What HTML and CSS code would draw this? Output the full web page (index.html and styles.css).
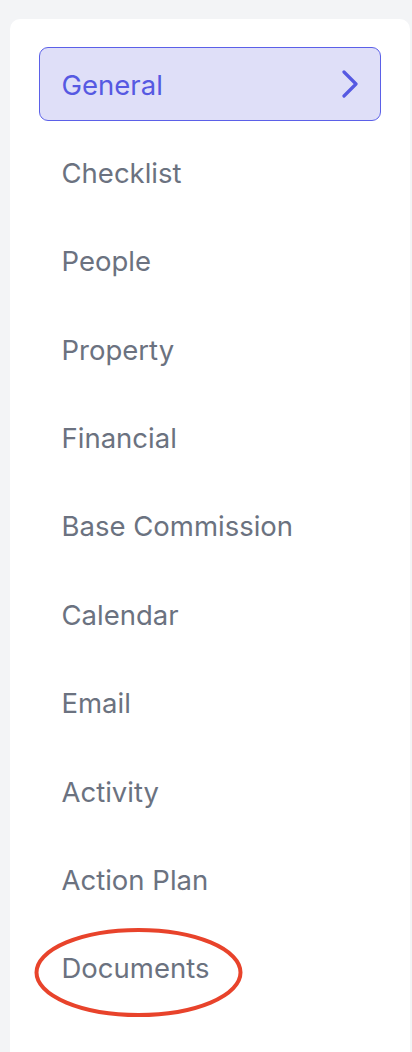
FILE: index.html
```html
<!DOCTYPE html>
<html lang="en">
<head>
<meta charset="utf-8">
<title>Menu</title>
<link rel="stylesheet" href="styles.css">
</head>
<body>
<div class="page">
  <nav class="card">
    <ul class="menu">
      <li class="item active">
        <span class="label">General</span>
        <svg class="chev" width="16" height="28" viewBox="0 0 16 28"><path d="M2 2 L14 14 L2 26" fill="none" stroke="currentColor" stroke-width="3.2" stroke-linecap="round" stroke-linejoin="round"/></svg>
      </li>
      <li class="item"><span class="label">Checklist</span></li>
      <li class="item"><span class="label">People</span></li>
      <li class="item"><span class="label">Property</span></li>
      <li class="item"><span class="label">Financial</span></li>
      <li class="item"><span class="label">Base Commission</span></li>
      <li class="item"><span class="label">Calendar</span></li>
      <li class="item"><span class="label">Email</span></li>
      <li class="item"><span class="label">Activity</span></li>
      <li class="item"><span class="label">Action Plan</span></li>
      <li class="item highlighted">
        <span class="label">Documents</span>
        <svg class="ring" width="209" height="91" viewBox="0 0 209 91"><ellipse cx="104.5" cy="45.5" rx="102" ry="42.5" fill="none" stroke="#e8432b" stroke-width="4"/></svg>
      </li>
    </ul>
  </nav>
</div>
</body>
</html>
```
FILE: styles.css
```css
* { box-sizing: border-box; }
html, body {
  margin: 0;
  padding: 0;
  background: #f3f4f6;
}
body {
  font-family: Inter, "Noto Sans", "Liberation Sans", sans-serif;
  overflow: hidden;
}
.page {
  padding: 19px 2px 0 10px;
  height: 1052px;
}
.card {
  background: #ffffff;
  border-radius: 10px 10px 0 0;
  height: 100%;
  padding: 28px 29px 0 29px;
}
.menu {
  list-style: none;
  margin: 0;
  padding: 0;
  display: flex;
  flex-direction: column;
  gap: 14.9px;
}
.item {
  position: relative;
  height: 73.5px;
  width: 342px;
  display: flex;
  align-items: center;
  justify-content: space-between;
  padding: 0 22px 0 21.5px;
  border: 1px solid transparent;
  border-radius: 9px;
  color: #6b7280;
  font-size: 27.5px;
}
.label {
  padding-top: 1.5px;
}
.item.active {
  background: #dfdff8;
  border-color: #5b60e8;
  color: #5659e2;
}
.chev {
  color: #5659e2;
  margin-top: 1px;
}
.ring {
  position: absolute;
  left: -6px;
  top: -5px;
}
```
